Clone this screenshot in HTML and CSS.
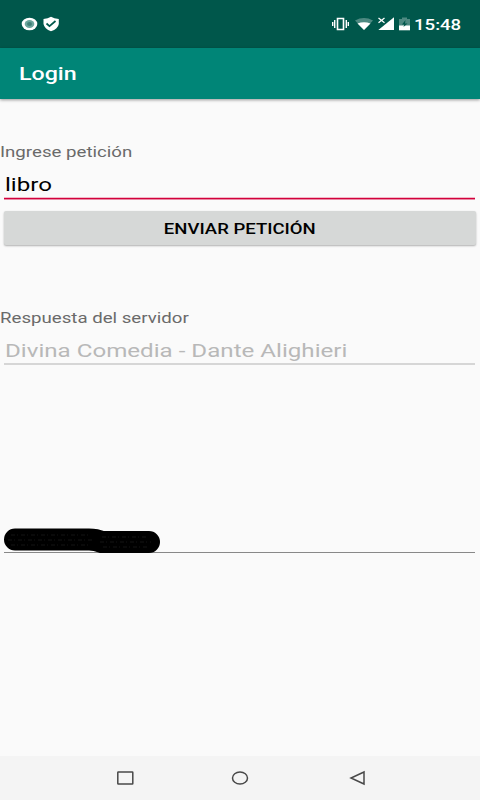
FILE: index.html
```html
<!DOCTYPE html>
<html lang="es">
<head>
    <meta charset="UTF-8">
    <meta name="viewport" content="width=device-width, initial-scale=1.0">
    <title>Login</title>
    <link rel="stylesheet" href="styles.css">
</head>
<body>
    <div class="statusbar">
        <svg class="notifications" width="40" height="18" viewBox="0 0 40 18">
            <ellipse cx="8.5" cy="9" rx="7.8" ry="6.3" fill="#fff"/>
            <ellipse cx="8.5" cy="9" rx="4.8" ry="4" fill="#6ba59c"/>
            <ellipse cx="8.5" cy="9" rx="2.5" ry="2" fill="#3f8077"/>
            <path d="M22.5 4 Q27 3.8 30 1.8 Q33 3.8 37.8 4 V9 Q37 14 30 16.3 Q23.5 14 22.5 9 Z" fill="#fff"/>
            <path d="M25.5 8.5 L28.5 11.2 L34.5 6" fill="none" stroke="#00574b" stroke-width="1.7"/>
        </svg>
        <svg class="system" width="80" height="18" viewBox="0 0 80 18">
            <!-- vibrate -->
            <path d="M5.5 3.5 H11.5 V14.5 H5.5 Z" fill="none" stroke="#fff" stroke-width="1.6"/>
            <path d="M2.7 5 V13 M14.3 5 V13 M0.7 7 V11 M16.3 7 V11" stroke="#fff" stroke-width="1.4"/>
            <!-- wifi -->
            <path d="M23 5.5 Q32 .7 41 5.5 L32 15 Z" fill="#4d8981"/>
            <path d="M25.5 8.4 Q32 6 38.5 8.4 L32 15 Z" fill="#fff"/>
            <!-- signal -->
            <path d="M62 2.3 V15 H46.3 Z" fill="#fff"/>
            <path d="M46.5 3 L52.5 7.8 M52.5 3 L46.5 7.8" stroke="#fff" stroke-width="1.3"/>
            <!-- battery -->
            <path d="M67 4 H70 V2.5 H75 V4 H78 V11 H67 Z" fill="#4d8981"/>
            <path d="M67 10.5 H78 V15.3 H67 Z" fill="#fff"/>
            <path d="M73.5 5 L70 9.5 H72.3 L71.5 12 L75.5 8.5 H73 Z" fill="#00574b"/>
        </svg>
        <span class="clock"><span class="wide">15:48</span></span>
    </div>
    <header class="toolbar">
        <h1 class="wide">Login</h1>
    </header>

    <main class="content">
        <div class="label"><span class="wide">Ingrese petición</span></div>
        <div class="field active"><span class="wide">libro</span></div>
        <button class="send" type="button"><span class="wide">ENVIAR PETICIÓN</span></button>

        <div class="label answer"><span class="wide">Respuesta del servidor</span></div>
        <div class="field disabled"><span class="wide">Divina Comedia - Dante Alighieri</span></div>

        <div class="field hidden-text">
            <svg width="158" height="26" viewBox="0 0 158 26">
                <path d="M11 12.500 H85 Q92 12.500 98 15 H145" fill="none" stroke="#000" stroke-width="22" stroke-linecap="round" stroke-linejoin="round"/>
                <path d="M7 8 H86 M4 13 H88 M7 18 H87 M98 10 H143 M96 15 H147 M99 20 H144" stroke="#282828" stroke-width=".5" stroke-dasharray="4 2 1 3"/>
            </svg>
        </div>
    </main>

    <nav class="navbar">
        <svg width="480" height="44" viewBox="0 0 480 44" fill="none" stroke="#484848" stroke-width="1.5">
            <rect x="117.8" y="16" width="15" height="12" rx=".5"/>
            <ellipse cx="240" cy="22" rx="7.5" ry="6"/>
            <path d="M364 16 V28 L351 22 Z"/>
        </svg>
    </nav>
</body>
</html>
```
FILE: styles.css
```css
* {
    box-sizing: border-box;
}
body {
    margin: 0;
    height: 800px;
    display: flex;
    flex-direction: column;
    background-color: #fafafa;
    font-family: Roboto, sans-serif;
    overflow: hidden;
}
.wide {
    display: inline-block;
    transform: scaleX(1.27);
    transform-origin: left center;
    white-space: nowrap;
}
svg {
    display: block;
}
.statusbar {
    height: 48px;
    display: flex;
    align-items: center;
    padding: 0 18px 0 21px;
    background-color: #00574b;
    color: #fff;
}
.system {
    margin-left: auto;
}
.clock {
    width: 48px;
    margin-left: 2px;
    padding-top: 1px;
    font-size: 15px;
    font-weight: 500;
}
.clock .wide {
    transform: scaleX(1.24);
}
.toolbar {
    height: 51px;
    display: flex;
    align-items: center;
    padding-left: 19px;
    background-color: #008577;
    color: #fff;
    box-shadow: 0 1px 3px rgba(0, 0, 0, 0.4);
}
.toolbar h1 {
    margin: 0;
    font-size: 18.3px;
    font-weight: 500;
}
.content {
    flex: 1;
    padding-top: 44px;
}
.label {
    height: 18px;
    line-height: 18px;
    font-size: 14.7px;
    color: #6a6a6a;
}
.field {
    height: 38px;
    margin: 0 5px 0 4px;
    padding-left: 0.5px;
    line-height: 48px;
    font-size: 19px;
}
.active {
    border-bottom: 1px solid #d2003c;
    box-shadow: 0 1px 0 #e78aa4, inset 0 -2px 0 -1px #f3b9c8;
    color: #000;
}
.disabled {
    border-bottom: 2px solid #d6d6d6;
    color: #b8b8b8;
}
.send {
    display: block;
    width: 472px;
    height: 34px;
    margin: 12px 4px 0;
    padding: 1px 0 0;
    border: 0;
    border-radius: 2px;
    background-color: #d6d8d7;
    box-shadow: 0 1px 2px rgba(0, 0, 0, 0.3);
    font-family: inherit;
    font-size: 14.6px;
    font-weight: 500;
    color: #000;
}
.send .wide {
    transform-origin: center;
}
.answer {
    margin-top: 64px;
}
.hidden-text {
    height: 26px;
    margin-top: 162px;
    padding: 0;
    border-bottom: 1px solid #888;
}
.navbar {
    height: 44px;
    background-color: #f4f4f4;
}
```
